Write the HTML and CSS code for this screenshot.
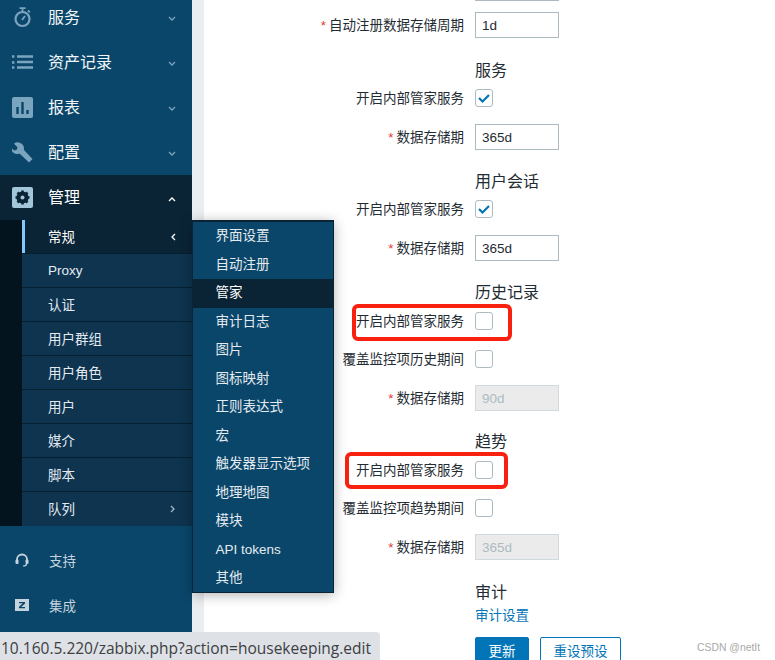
FILE: index.html
```html
<!DOCTYPE html>
<html lang="zh">
<head>
<meta charset="utf-8">
<title>管家</title>
<link rel="stylesheet" href="styles.css">
</head>
<body>
<div class="app">
  <aside class="sidebar">
    <nav class="nav">
      <a class="nav-item"><svg class="nav-icon" viewBox="0 0 21 21"><circle cx="10.500" cy="12" r="7" fill="none" stroke="#7ba4bf" stroke-width="2.200"/><path d="M7.500 1.200h6M10.500 1.500v3M16 3.500l1.800 1.800M10 13l3-4" fill="none" stroke="#7ba4bf" stroke-width="1.800"/></svg><span class="nav-label">服务</span><svg class="chev" viewBox="0 0 8 6"><path d="M1 1l3 3 3-3"/></svg></a>
      <a class="nav-item"><svg class="nav-icon" viewBox="0 0 21 21"><path d="M0 4.500h2.400M0 10.500h2.400M0 15.500h2.400" stroke="#7ba4bf" stroke-width="2.400" fill="none"/><path d="M5 4.500h16M5 10h16M5 15.500h16" stroke="#7ba4bf" stroke-width="2.600" fill="none"/></svg><span class="nav-label">资产记录</span><svg class="chev" viewBox="0 0 8 6"><path d="M1 1l3 3 3-3"/></svg></a>
      <a class="nav-item"><svg class="nav-icon" viewBox="0 0 21 21"><rect width="21" height="21" rx="2" fill="#7ba4bf"/><path d="M5.500 10v7M10.500 5v12M15.500 13v4" stroke="#0a466a" stroke-width="2.400"/></svg><span class="nav-label">报表</span><svg class="chev" viewBox="0 0 8 6"><path d="M1 1l3 3 3-3"/></svg></a>
      <a class="nav-item"><svg class="nav-icon" viewBox="0 0 21 21"><path d="M7 0.500a5.600 5.600 0 0 0-5 1.200L5.500 5.200 4.800 7.800 2 8.500-0.800 5.200A6 6 0 0 0 7.500 11.500L17 20.500 20.500 17 11.800 7.800A6 6 0 0 0 7 0.500z" fill="#7ba4bf"/></svg><span class="nav-label">配置</span><svg class="chev" viewBox="0 0 8 6"><path d="M1 1l3 3 3-3"/></svg></a>
      <a class="nav-item nav-item-active"><svg class="nav-icon" viewBox="0 0 21 21"><rect width="21" height="21" rx="2" fill="#a4c6da"/><circle cx="10.500" cy="10.500" r="4.600" fill="none" stroke="#0a2436" stroke-width="3"/><path d="M10.500 3.500v14M3.500 10.500h14M5.500 5.500l10 10M15.500 5.500l-10 10" stroke="#0a2436" stroke-width="2.600"/><circle cx="10.500" cy="10.500" r="2" fill="#a4c6da"/></svg><span class="nav-label">管理</span><svg class="chev chev-on" viewBox="0 0 8 6"><path d="M1 5l3-3 3 3"/></svg></a>
    </nav>
    <div class="sub-wrap">
      <ul class="sub">
        <li class="sub-item sub-item-on"><span>常规</span><svg class="chev-side chev-on" viewBox="0 0 6 8"><path d="M5 1L2 4l3 3"/></svg></li>
        <li class="sub-item"><span class="sub-latin">Proxy</span></li>
        <li class="sub-item"><span>认证</span></li>
        <li class="sub-item"><span>用户群组</span></li>
        <li class="sub-item"><span>用户角色</span></li>
        <li class="sub-item"><span>用户</span></li>
        <li class="sub-item"><span>媒介</span></li>
        <li class="sub-item"><span>脚本</span></li>
        <li class="sub-item"><span>队列</span><svg class="chev-side" viewBox="0 0 6 8"><path d="M1 1l3 3-3 3"/></svg></li>
      </ul>
    </div>
    <div class="extra">
      <a class="extra-item"><svg class="extra-icon" viewBox="0 0 14 14"><path d="M2 9V6.500a5 5 0 0 1 10 0V9" fill="none" stroke="#c4d3dd" stroke-width="1.800"/><rect x="0.500" y="6.500" width="3" height="4.500" rx="1" fill="#c4d3dd"/><rect x="10.500" y="6.500" width="3" height="4.500" rx="1" fill="#c4d3dd"/><path d="M11.500 11c0 1.500-1.500 2-3.500 2" fill="none" stroke="#c4d3dd" stroke-width="1.200"/></svg><span>支持</span></a>
      <a class="extra-item"><svg class="extra-icon" viewBox="0 0 14 14"><rect y="1" width="14" height="12" fill="#c4d3dd"/><path d="M4 4h6v1.400L6.200 9H10v1.200H4V8.800L7.800 5.200H4z" fill="#0a466a"/></svg><span>集成</span></a>
    </div>
  </aside>
  <div class="gutter"></div>
  <main class="form">
    <div class="row row-top"><span class="label"></span><span class="input"></span></div>
    <div class="row gap-11"><label class="label"><i class="req">*</i>自动注册数据存储周期</label><span class="input">1d</span></div>
    <div class="row gap-22"><span class="label"></span><h3 class="head">服务</h3></div>
    <div class="row gap-9"><label class="label">开启内部管家服务</label><span class="check check-on"><svg viewBox="0 0 18 18"><path d="M4 9l3.500 3.500L14 6" fill="none" stroke="#0275b8" stroke-width="2.200"/></svg></span></div>
    <div class="row gap-17"><label class="label"><i class="req">*</i>数据存储期</label><span class="input">365d</span></div>
    <div class="row gap-21"><span class="label"></span><h3 class="head">用户会话</h3></div>
    <div class="row gap-9"><label class="label">开启内部管家服务</label><span class="check check-on"><svg viewBox="0 0 18 18"><path d="M4 9l3.500 3.500L14 6" fill="none" stroke="#0275b8" stroke-width="2.200"/></svg></span></div>
    <div class="row gap-17"><label class="label"><i class="req">*</i>数据存储期</label><span class="input">365d</span></div>
    <div class="row gap-21"><span class="label"></span><h3 class="head">历史记录</h3></div>
    <div class="row gap-10"><label class="label">开启内部管家服务</label><span class="check"></span></div>
    <div class="row gap-20"><label class="label">覆盖监控项历史期间</label><span class="check"></span></div>
    <div class="row gap-17"><label class="label"><i class="req">*</i>数据存储期</label><span class="input input-off">90d</span></div>
    <div class="row gap-20"><span class="label"></span><h3 class="head">趋势</h3></div>
    <div class="row gap-10"><label class="label">开启内部管家服务</label><span class="check"></span></div>
    <div class="row gap-20"><label class="label">覆盖监控项趋势期间</label><span class="check"></span></div>
    <div class="row gap-17"><label class="label"><i class="req">*</i>数据存储期</label><span class="input input-off">365d</span></div>
    <div class="row gap-22"><span class="label"></span><h3 class="head">审计</h3></div>
    <div class="row gap-4"><span class="label"></span><a class="link">审计设置</a></div>
    <div class="row gap-13"><span class="label"></span><div class="actions"><button class="btn btn-main">更新</button><button class="btn btn-alt">重设预设</button></div></div>
  </main>
</div>

<ul class="popup">
  <li class="pop-item">界面设置</li>
  <li class="pop-item">自动注册</li>
  <li class="pop-item pop-item-on">管家</li>
  <li class="pop-item">审计日志</li>
  <li class="pop-item">图片</li>
  <li class="pop-item">图标映射</li>
  <li class="pop-item">正则表达式</li>
  <li class="pop-item">宏</li>
  <li class="pop-item">触发器显示选项</li>
  <li class="pop-item">地理地图</li>
  <li class="pop-item">模块</li>
  <li class="pop-item">API tokens</li>
  <li class="pop-item">其他</li>
</ul>

<div class="mark mark-a"></div>
<div class="mark mark-b"></div>
<div class="status">10.160.5.220/zabbix.php?action=housekeeping.edit</div>
<div class="watermark">CSDN @netIt</div>
</body>
</html>
```

FILE: styles.css
```css
* { box-sizing: border-box; }
html, body { margin: 0; height: 660px; overflow: hidden; background: #fff; }
body { position: relative; font-family: "Liberation Sans", "Noto Sans CJK SC", sans-serif; font-size: 13.5px; color: #1f2c33; }
ul { list-style: none; margin: 0; padding: 0; }

.app { display: flex; height: 660px; }

.sidebar { width: 192px; flex: none; background: #0a466a; overflow: hidden; display: flex; flex-direction: column; }
.nav { margin-top: -5px; }
.nav-item { height: 45px; display: flex; align-items: center; padding: 0 16px 0 12px; color: #f2f6f8; font-size: 16px; }
.nav-item-active { background: #0a2436; color: #fff; }
.nav-icon { width: 21px; height: 21px; flex: none; margin-right: 15px; }
.nav-label { flex: 1; margin-bottom: 3px; }
.chev { width: 8px; height: 6px; flex: none; margin-top: 3px; fill: none; stroke: #7ba4bf; stroke-width: 1.300; }
.chev-on { stroke: #fff; }

.sub-wrap { background: #04141f; padding-left: 22px; height: 306px; flex: none; }
.sub-item { height: 34px; display: flex; align-items: center; justify-content: space-between; padding: 0 16px 0 26px; background: #0e3450; border-bottom: 1px solid #06202f; color: #e4ebf0; }
.sub-item:last-child { border-bottom: 0; }
.sub-item-on { background: #0a2436; box-shadow: inset 3px 0 0 #80c8ff; color: #fff; }
.sub-item span { margin-bottom: 2px; }
.sub-item .sub-latin { margin-bottom: 0; }
.chev-side { width: 6px; height: 8px; fill: none; stroke: #9fb9ca; stroke-width: 1.300; }
.chev-side.chev-on { stroke: #fff; }

.extra { padding-top: 11px; }
.extra-item { height: 45px; display: flex; align-items: center; padding-left: 15px; color: #c4d3dd; }
.extra-icon { width: 14px; height: 14px; flex: none; margin-right: 20px; }

.gutter { width: 12px; flex: none; background: #ebeef0; }

.form { flex: 1; overflow: hidden; }
.row { display: flex; align-items: center; gap: 11px; }
.row-top { margin-top: -25px; }
.gap-4 { margin-top: 4px; }
.gap-9 { margin-top: 9px; }
.gap-10 { margin-top: 10px; }
.gap-11 { margin-top: 11px; }
.gap-13 { margin-top: 13px; }
.gap-17 { margin-top: 17px; }
.gap-20 { margin-top: 20px; }
.gap-21 { margin-top: 21px; }
.gap-22 { margin-top: 22px; }

.label { width: 260px; flex: none; height: 16px; line-height: 18px; text-align: right; color: #1f2c33; white-space: nowrap; }
.req { font-style: normal; color: #e33734; margin-right: 3px; }
.input { width: 84px; height: 26px; border: 1px solid #acbbc2; padding: 0 6px; display: flex; align-items: center; color: #1f2c33; }
.input-off { background: #ebebeb; border-color: #d0d9dd; color: #acbbc2; }
.check { width: 18px; height: 18px; border: 1px solid #acbbc2; border-radius: 3px; background: #fff; display: block; position: relative; overflow: hidden; }
.check svg { position: absolute; left: -1px; top: -1px; width: 18px; height: 18px; display: block; }
.head { margin: 0; font-size: 16px; font-weight: 400; line-height: 22px; height: 20px; white-space: nowrap; }
.link { color: #0275b8; line-height: 20px; height: 18px; white-space: nowrap; }
.actions { display: flex; gap: 11px; }
.btn { height: 26px; font: inherit; border-radius: 2px; padding: 0; }
.btn-main { width: 54px; background: #0275b8; border: 1px solid #0275b8; color: #fff; }
.btn-alt { width: 81px; background: #fff; border: 1px solid #0275b8; color: #0275b8; }

.popup { position: absolute; left: 192px; top: 220px; width: 142px; height: 373px; background: #0a466a; border: 1px solid #0a2436; border-top-width: 2px; box-shadow: 0 2px 12px rgba(0, 0, 0, .3); }
.pop-item { height: 28.500px; line-height: 28px; padding-left: 22.500px; color: #e4ebf0; }
.pop-item-on { background: #0a2436; color: #fff; }

.mark { position: absolute; border: 4px solid #f8200f; border-radius: 6px; }
.mark-a { left: 352px; top: 304px; width: 160px; height: 37px; }
.mark-b { left: 345px; top: 452px; width: 163px; height: 37px; }

.status { position: absolute; left: 0; top: 632px; width: 380px; height: 28px; background: #dee1e6; border-top-right-radius: 4px; padding-left: 1px; font-family: "Open Sans", sans-serif; font-size: 15.500px; line-height: 33px; color: #3c4043; white-space: nowrap; overflow: hidden; }
.watermark { position: absolute; left: 697px; top: 641px; font-size: 10.400px; line-height: 13px; color: #a9a9a9; }
```
